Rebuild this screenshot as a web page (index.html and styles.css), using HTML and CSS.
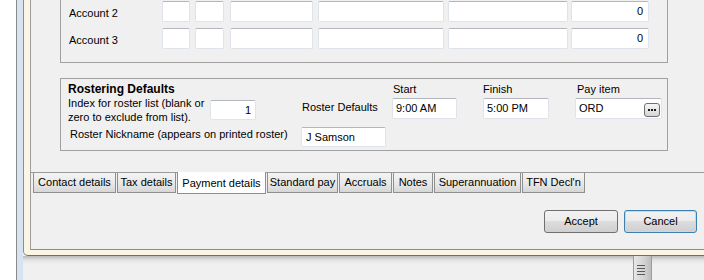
FILE: index.html
```html
<!DOCTYPE html>
<html lang="en">
<head>
    <meta charset="UTF-8">
    <title>Employee - Payment details</title>
    <link rel="stylesheet" href="styles.css">
</head>
<body>
    <div class="desk">
        <div class="desk-edge"></div>
        <div class="pane">
            <div class="dialog">
                <div class="client">
                    <!-- bank accounts -->
                    <div class="group accounts">
                        <div class="acct-row">
                            <span class="acct-label">Account 2</span>
                            <div class="box c1"></div>
                            <div class="box c2"></div>
                            <div class="box c3"></div>
                            <div class="box c4"></div>
                            <div class="box c5"></div>
                            <div class="box c6 num">0</div>
                        </div>
                        <div class="acct-row">
                            <span class="acct-label">Account 3</span>
                            <div class="box c1"></div>
                            <div class="box c2"></div>
                            <div class="box c3"></div>
                            <div class="box c4"></div>
                            <div class="box c5"></div>
                            <div class="box c6 num">0</div>
                        </div>
                    </div>

                    <!-- rostering -->
                    <div class="group roster">
                        <div class="roster-title">Rostering Defaults</div>
                        <div class="col-label start-label">Start</div>
                        <div class="col-label finish-label">Finish</div>
                        <div class="col-label pay-label">Pay item</div>

                        <div class="index-text">Index for roster list (blank or<br>zero to exclude from list).</div>
                        <div class="box num index-box">1</div>
                        <div class="roster-def">Roster Defaults</div>
                        <div class="box time-box start-box">9:00 AM</div>
                        <div class="box time-box finish-box">5:00 PM</div>
                        <div class="box pay-box">
                            <span>ORD</span>
                            <span class="dots-btn">
                                <svg width="8" height="2" viewBox="0 0 8 2"><rect x="0" y="0" width="2" height="2" fill="#1a1a1a"/><rect x="3" y="0" width="2" height="2" fill="#1a1a1a"/><rect x="6" y="0" width="2" height="2" fill="#1a1a1a"/></svg>
                            </span>
                        </div>

                        <div class="nick-label">Roster Nickname (appears on printed roster)</div>
                        <div class="box nick-box">J Samson</div>
                    </div>

                    <!-- tabs -->
                    <div class="tab-strip">
                        <div class="tab t-contact">Contact details</div>
                        <div class="tab t-tax">Tax details</div>
                        <div class="tab active t-payment">Payment details</div>
                        <div class="tab t-standard">Standard pay</div>
                        <div class="tab t-accruals">Accruals</div>
                        <div class="tab t-notes">Notes</div>
                        <div class="tab t-super">Superannuation</div>
                        <div class="tab t-tfn">TFN Decl'n</div>
                    </div>

                    <div class="button-row">
                        <div class="btn accept-btn">Accept</div>
                        <div class="btn cancel-btn">Cancel</div>
                    </div>
                </div>
            </div>
            <div class="below">
                <div class="thumb">
                    <svg width="8" height="11" viewBox="0 0 8 11">
                        <rect x="0" y="0" width="8" height="1" fill="#5a5a5a"/>
                        <rect x="0" y="3" width="8" height="1" fill="#5a5a5a"/>
                        <rect x="0" y="6" width="8" height="1" fill="#5a5a5a"/>
                        <rect x="0" y="9" width="8" height="1" fill="#5a5a5a"/>
                    </svg>
                </div>
            </div>
        </div>
    </div>
</body>
</html>
```

FILE: styles.css
```css
body {
    margin: 0;
    width: 704px;
    height: 280px;
    overflow: hidden;
    font-family: "Liberation Sans", Arial, sans-serif;
    font-size: 11px;
    color: #000;
    background: #f0f0f0;
}
.desk {
    display: flex;
    height: 280px;
}
.desk-edge {
    width: 16px;
    flex: none;
    background: #fff;
    border-right: 1px solid #8a8a8a;
}
.pane {
    flex: 1;
    min-width: 0;
    background: linear-gradient(to right, #d7e3f1 0 6px, #f0f0f0 6px);
}
.dialog {
    margin-left: 6px;
    padding: 0 0 5px 6px;
    border-left: 1px solid #8e8e8e;
    border-bottom: 1px solid #6e6e6e;
    border-bottom-left-radius: 5px;
    background: #fbf6e4;
}
.client {
    height: 249px;
    border-left: 1px solid #9c9c9c;
    border-bottom: 1px solid #8a8a8a;
    background: #f0f0f0;
}
.group {
    margin-left: 29px;
    width: 608px;
    box-sizing: border-box;
    border: 1px solid #a0a0a0;
}
.accounts {
    border-top: none;
    padding: 1px 0 13px 8px;
}
.acct-row {
    display: flex;
    align-items: center;
    height: 21px;
}
.acct-row + .acct-row {
    margin-top: 6px;
}
.acct-label {
    width: 93px;
    padding-top: 2px;
}
.box {
    box-sizing: border-box;
    height: 21px;
    background: #fff;
    border: 1px solid #dfe3ea;
    border-top-color: #b3b6bd;
    border-radius: 2px;
    padding: 0 4px;
    line-height: 19px;
    white-space: nowrap;
}
.num {
    text-align: right;
}
.c1 { width: 28px; margin-right: 5px; }
.c2 { width: 29px; margin-right: 6px; }
.c3 { width: 83px; margin-right: 5px; }
.c4 { width: 126px; margin-right: 4px; }
.c5 { width: 120px; margin-right: 3px; }
.c6 { width: 78px; padding-right: 5px; }

.roster {
    margin-top: 15px;
    padding: 4px 0 3px 7px;
    display: grid;
    grid-template-columns: 142px 91px 91px 91px 92px 1fr;
    grid-template-rows: 13px 28px auto;
}
.roster-title {
    grid-column: 1 / 4;
    font-weight: bold;
    font-size: 12px;
    line-height: 13px;
}
.col-label {
    line-height: 13px;
}
.start-label { grid-column: 4; padding-left: 1px; }
.finish-label { grid-column: 5; }
.pay-label { grid-column: 6; padding-left: 2px; }

.index-text {
    grid-column: 1;
    line-height: 14px;
}
.index-box {
    grid-column: 2;
    width: 46px;
    height: 20px;
    line-height: 18px;
    margin-top: 4px;
    padding-right: 4px;
}
.roster-def {
    grid-column: 3;
    margin-top: 5px;
    line-height: 13px;
    padding-left: 1px;
}
.time-box {
    margin-top: 2px;
    padding-left: 3px;
}
.start-box { grid-column: 4; width: 65px; }
.finish-box { grid-column: 5; width: 66px; }
.pay-box {
    grid-column: 6;
    width: 87px;
    margin-top: 2px;
    padding-left: 3px;
    padding-right: 1px;
    display: flex;
    justify-content: space-between;
}
.dots-btn {
    box-sizing: border-box;
    width: 16px;
    height: 14px;
    align-self: flex-end;
    margin-bottom: 1px;
    border: 1px solid #6f6f6f;
    border-radius: 3px;
    background: linear-gradient(#f6f6f6, #e6e6e6 50%, #d4d4d4);
    display: flex;
    align-items: center;
    justify-content: center;
}
.nick-label {
    grid-column: 1 / 3;
    margin-top: 3px;
    padding-left: 2px;
    line-height: 14px;
}
.nick-box {
    grid-column: 3;
    width: 85px;
    height: 20px;
    line-height: 18px;
    margin-top: 3px;
    padding-left: 4px;
}

.tab-strip {
    margin-top: 21px;
    border-top: 1px solid #9a9a9a;
    display: flex;
    padding-left: 2px;
    height: 21px;
}
.tab {
    box-sizing: border-box;
    height: 20px;
    margin-right: 1px;
    border: 1px solid #8f8f8f;
    border-top: none;
    background: linear-gradient(#f4f4f4, #e8e8e8 55%, #d6d6d6);
    text-align: center;
    line-height: 18px;
    white-space: nowrap;
}
.tab.active {
    height: 22px;
    margin-top: -1px;
    background: #fff;
    padding-top: 2px;
}
.t-contact { width: 83px; }
.t-tax { width: 59px; }
.t-payment { width: 89px; }
.t-standard { width: 71px; }
.t-accruals { width: 53px; }
.t-notes { width: 40px; }
.t-super { width: 87px; }
.t-tfn { width: 63px; }

.button-row {
    display: flex;
    margin-top: 16px;
    padding-left: 513px;
}
.btn {
    box-sizing: border-box;
    height: 23px;
    border: 1px solid #707070;
    border-radius: 3px;
    background: linear-gradient(#f2f2f2, #ebebeb 50%, #dddddd 50%, #cfcfcf);
    text-align: center;
    line-height: 21px;
}
.accept-btn {
    width: 74px;
}
.cancel-btn {
    width: 73px;
    margin-left: 6px;
    border-color: #3c7fb1;
    box-shadow: inset 0 0 0 1px #b4e0f7;
}

.below {
    height: 24px;
    margin-left: 6px;
    background: linear-gradient(#b9b9b9, #e2e2e2 4px, #f0f0f0 8px);
    display: flex;
}
.thumb {
    box-sizing: border-box;
    margin-left: 610px;
    width: 19px;
    height: 24px;
    border-left: 1px solid #9b9b9b;
    border-right: 1px solid #9b9b9b;
    background: linear-gradient(to right, #e6e6e6, #d2d2d2 60%, #bcbcbc);
    padding: 9px 0 0 3px;
}
.thumb svg {
    display: block;
}
```
